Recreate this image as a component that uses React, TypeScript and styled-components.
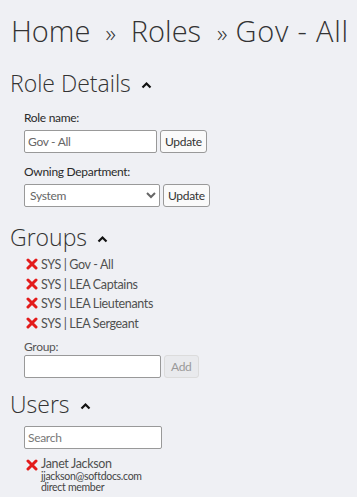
import React from "react";
import styled, { createGlobalStyle } from "styled-components";

const GlobalStyle = createGlobalStyle`
  html, body {
    margin: 0;
    padding: 0;
    background: #eff0f4;
  }
  body {
    font-family: "Lato", "Open Sans", sans-serif;
    color: #333;
  }
`;

const Page = styled.div`
  padding: 9px 10px 0 10px;
  width: 357px;
  box-sizing: border-box;
`;

const Breadcrumb = styled.h1`
  margin: 0 0 0 1px;
  font-family: "Open Sans", sans-serif;
  font-weight: 300;
  font-size: 29px;
  line-height: 44px;
  color: #333;
  white-space: nowrap;
`;

const Sep = styled.span<{ $left: number; $right: number }>`
  margin: 0 ${(p) => p.$right}px 0 ${(p) => p.$left}px;
  font-size: 24px;
`;

const Crumb = styled.span<{ $spacing?: number }>`
  letter-spacing: ${(p) => p.$spacing ?? 0}px;
`;

const SectionTitle = styled.h2<{ $top: number }>`
  margin: ${(p) => p.$top}px 0 0 0;
  font-family: "Open Sans", sans-serif;
  font-weight: 300;
  font-size: 23px;
  line-height: 30px;
  color: #333;
  display: flex;
  align-items: center;
  gap: 10px;
`;

const Caret = () => (
  <svg width="11" height="8" viewBox="0 0 11 8" style={{ marginTop: 4 }}>
    <polyline
      points="1.5,6.5 5.5,2.5 9.5,6.5"
      fill="none"
      stroke="#111"
      strokeWidth="2.2"
    />
  </svg>
);

const Section = styled.section<{ $gap?: number }>`
  padding-left: 14px;
  margin-top: ${(p) => p.$gap ?? 0}px;
`;

const Label = styled.div<{ $top?: number; $muted?: boolean }>`
  font-size: 12px;
  letter-spacing: -0.3px;
  line-height: ${(p) => (p.$muted ? 14 : 18)}px;
  color: ${(p) => (p.$muted ? "#555" : "#2a2a2a")};
  margin-top: ${(p) => p.$top ?? 0}px;
  margin-bottom: ${(p) => (p.$muted ? 1 : 3)}px;
`;

const Field = styled.div`
  display: flex;
  gap: 3px;
  align-items: center;
`;

const TextInput = styled.input<{ $w: number }>`
  box-sizing: border-box;
  width: ${(p) => p.$w}px;
  height: 23px;
  border: 1px solid #999;
  border-radius: 2px;
  background: #fff;
  font-family: "Lato", sans-serif;
  font-size: 12px;
  letter-spacing: -0.3px;
  color: #666;
  padding: 0 3px;
  outline: none;

  &::placeholder {
    color: #777;
  }
`;

const Select = styled.select`
  box-sizing: border-box;
  width: 136px;
  height: 23px;
  border: 1px solid #999;
  border-radius: 2px;
  background: #fff;
  font-family: "Lato", sans-serif;
  font-size: 12px;
  letter-spacing: -0.3px;
  color: #666;
  padding: 0 1px;
`;

const Button = styled.button`
  box-sizing: border-box;
  height: 23px;
  padding: 0 4px;
  border: 1px solid #999;
  border-radius: 3px;
  background: #fafafa;
  font-family: "Lato", sans-serif;
  font-size: 12px;
  letter-spacing: -0.3px;
  color: #333;

  &:disabled {
    border-color: #dcdcdc;
    background: #e9eaed;
    color: #999;
    padding: 0 6px;
  }
`;

const ItemList = styled.ul`
  list-style: none;
  margin: 0;
  padding: 0 0 0 2px;
`;

const Item = styled.li`
  display: flex;
  align-items: flex-start;
  gap: 3px;
  font-size: 12.5px;
  letter-spacing: -0.35px;
  line-height: 19.7px;
  color: #505050;
`;

const RemoveIcon = () => (
  <svg width="12" height="12" viewBox="0 0 12 12" style={{ marginTop: 3, flexShrink: 0 }}>
    <path d="M2 2 L10 10 M10 2 L2 10" stroke="#e31b1b" strokeWidth="3" strokeLinecap="round" />
  </svg>
);

const UserInfo = styled.div`
  display: flex;
  flex-direction: column;
  line-height: 15px;
`;

const Meta = styled.span`
  font-size: 10.5px;
  letter-spacing: -0.3px;
  line-height: 11px;
  color: #444;
`;

const groups = ["SYS | Gov - All", "SYS | LEA Captains", "SYS | LEA Lieutenants", "SYS | LEA Sergeant"];

export default function App() {
  return (
    <Page>
      <GlobalStyle />
      <Breadcrumb>
        <Crumb>Home</Crumb>
        <Sep $left={15} $right={15}>»</Sep>
        <Crumb>Roles</Crumb>
        <Sep $left={16} $right={8}>»</Sep>
        <Crumb $spacing={0.8}>Gov - All</Crumb>
      </Breadcrumb>

      <SectionTitle $top={13}>
        Role Details <Caret />
      </SectionTitle>
      <Section $gap={11}>
        <Label>Role name:</Label>
        <Field>
          <TextInput $w={133} defaultValue="Gov - All" />
          <Button>Update</Button>
        </Field>
        <Label $top={10}>Owning Department:</Label>
        <Field>
          <Select defaultValue="System">
            <option>System</option>
          </Select>
          <Button>Update</Button>
        </Field>
      </Section>

      <SectionTitle $top={15}>
        Groups <Caret />
      </SectionTitle>
      <Section $gap={3}>
        <ItemList>
          {groups.map((g) => (
            <Item key={g}>
              <RemoveIcon />
              {g}
            </Item>
          ))}
        </ItemList>
        <Label $top={6} $muted>
          Group:
        </Label>
        <Field>
          <TextInput $w={137} />
          <Button disabled>Add</Button>
        </Field>
      </Section>

      <SectionTitle $top={11}>
        Users <Caret />
      </SectionTitle>
      <Section $gap={7}>
        <TextInput $w={138} placeholder="Search" />
        <ItemList style={{ marginTop: 7 }}>
          <Item>
            <RemoveIcon />
            <UserInfo>
              <span>Janet Jackson</span>
              <Meta>jjackson@softdocs.com</Meta>
              <Meta>direct member</Meta>
            </UserInfo>
          </Item>
        </ItemList>
      </Section>
    </Page>
  );
}
